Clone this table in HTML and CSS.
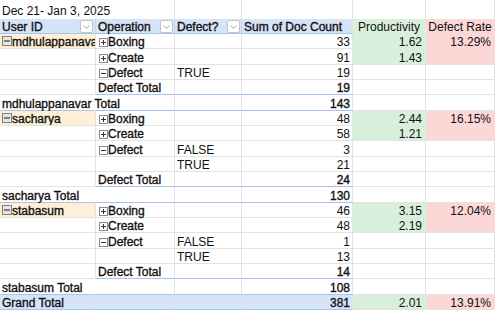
FILE: index.html
```html
<!DOCTYPE html>
<html>
<head>
<meta charset="utf-8">
<link rel="stylesheet" href="styles.css">
</head>
<body>
<div class="sheet">
  <div class="row title">
    <div class="cell ca spill">Dec 21- Jan 3, 2025</div>
    <div class="cell cb"></div><div class="cell cc"></div><div class="cell cd"></div><div class="cell ce"></div><div class="cell cf"></div>
  </div>
  <div class="row head">
    <div class="cell ca hd b">User ID<span class="dd"><svg width="7" height="4" viewBox="0 0 7 4"><path d="M0.5 0.5l3 3 3-3" fill="none" stroke="#a0a0a0"/></svg></span></div>
    <div class="cell cb hd b">Operation<span class="dd"><svg width="7" height="4" viewBox="0 0 7 4"><path d="M0.5 0.5l3 3 3-3" fill="none" stroke="#a0a0a0"/></svg></span></div>
    <div class="cell cc hd b">Defect?<span class="dd"><svg width="7" height="4" viewBox="0 0 7 4"><path d="M0.5 0.5l3 3 3-3" fill="none" stroke="#a0a0a0"/></svg></span></div>
    <div class="cell cd hd b">Sum of Doc Count</div>
    <div class="cell ce g gm ctr">Productivity</div>
    <div class="cell cf p pm ctr">Defect Rate</div>
  </div>

  <!-- mdhulappanavar -->
  <div class="row">
    <div class="cell ca user clip b"><svg class="tg" width="10" height="10" viewBox="0 0 10 10"><rect x="0.5" y="0.5" width="9" height="9" fill="#e6e6e6" stroke="#808080"/><path d="M2 5h6" stroke="#3c3c3c" stroke-width="1.2"/></svg>mdhulappanavar</div>
    <div class="cell cb b"><svg class="op" width="9" height="9" viewBox="0 0 9 9"><rect x="0.5" y="0.5" width="8" height="8" fill="#fff" stroke="#8a8a8a"/><path d="M2 4.5h5M4.5 2v5" stroke="#333"/></svg>Boxing</div>
    <div class="cell cc"></div>
    <div class="cell cd num">33</div>
    <div class="cell ce num g gm">1.62</div>
    <div class="cell cf num p pm">13.29%</div>
  </div>
  <div class="row">
    <div class="cell ca"></div>
    <div class="cell cb b"><svg class="op" width="9" height="9" viewBox="0 0 9 9"><rect x="0.5" y="0.5" width="8" height="8" fill="#fff" stroke="#8a8a8a"/><path d="M2 4.5h5M4.5 2v5" stroke="#333"/></svg>Create</div>
    <div class="cell cc"></div>
    <div class="cell cd num">91</div>
    <div class="cell ce num g">1.43</div>
    <div class="cell cf p"></div>
  </div>
  <div class="row">
    <div class="cell ca"></div>
    <div class="cell cb b"><svg class="op" width="9" height="9" viewBox="0 0 9 9"><rect x="0.5" y="0.5" width="8" height="8" fill="#fff" stroke="#8a8a8a"/><path d="M2 4.5h5" stroke="#333"/></svg>Defect</div>
    <div class="cell cc">TRUE</div>
    <div class="cell cd num">19</div>
    <div class="cell ce"></div><div class="cell cf"></div>
  </div>
  <div class="row">
    <div class="cell ca"></div>
    <div class="cell cb b bl">Defect Total</div>
    <div class="cell cc bl"></div>
    <div class="cell cd num b bl">19</div>
    <div class="cell ce"></div><div class="cell cf"></div>
  </div>
  <div class="row">
    <div class="cell ca spill b bl">mdhulappanavar Total</div>
    <div class="cell cb bl"></div>
    <div class="cell cc bl"></div>
    <div class="cell cd num b bl">143</div>
    <div class="cell ce"></div><div class="cell cf"></div>
  </div>

  <!-- sacharya -->
  <div class="row">
    <div class="cell ca user clip b"><svg class="tg" width="10" height="10" viewBox="0 0 10 10"><rect x="0.5" y="0.5" width="9" height="9" fill="#e6e6e6" stroke="#808080"/><path d="M2 5h6" stroke="#3c3c3c" stroke-width="1.2"/></svg>sacharya</div>
    <div class="cell cb b"><svg class="op" width="9" height="9" viewBox="0 0 9 9"><rect x="0.5" y="0.5" width="8" height="8" fill="#fff" stroke="#8a8a8a"/><path d="M2 4.5h5M4.5 2v5" stroke="#333"/></svg>Boxing</div>
    <div class="cell cc"></div>
    <div class="cell cd num">48</div>
    <div class="cell ce num g gm">2.44</div>
    <div class="cell cf num p pm">16.15%</div>
  </div>
  <div class="row">
    <div class="cell ca"></div>
    <div class="cell cb b"><svg class="op" width="9" height="9" viewBox="0 0 9 9"><rect x="0.5" y="0.5" width="8" height="8" fill="#fff" stroke="#8a8a8a"/><path d="M2 4.5h5M4.5 2v5" stroke="#333"/></svg>Create</div>
    <div class="cell cc"></div>
    <div class="cell cd num">58</div>
    <div class="cell ce num g">1.21</div>
    <div class="cell cf p"></div>
  </div>
  <div class="row">
    <div class="cell ca"></div>
    <div class="cell cb b"><svg class="op" width="9" height="9" viewBox="0 0 9 9"><rect x="0.5" y="0.5" width="8" height="8" fill="#fff" stroke="#8a8a8a"/><path d="M2 4.5h5" stroke="#333"/></svg>Defect</div>
    <div class="cell cc">FALSE</div>
    <div class="cell cd num">3</div>
    <div class="cell ce"></div><div class="cell cf"></div>
  </div>
  <div class="row">
    <div class="cell ca"></div>
    <div class="cell cb"></div>
    <div class="cell cc">TRUE</div>
    <div class="cell cd num">21</div>
    <div class="cell ce"></div><div class="cell cf"></div>
  </div>
  <div class="row">
    <div class="cell ca"></div>
    <div class="cell cb b bl">Defect Total</div>
    <div class="cell cc bl"></div>
    <div class="cell cd num b bl">24</div>
    <div class="cell ce"></div><div class="cell cf"></div>
  </div>
  <div class="row">
    <div class="cell ca spill b bl">sacharya Total</div>
    <div class="cell cb bl"></div>
    <div class="cell cc bl"></div>
    <div class="cell cd num b bl">130</div>
    <div class="cell ce"></div><div class="cell cf"></div>
  </div>

  <!-- stabasum -->
  <div class="row">
    <div class="cell ca user clip b"><svg class="tg" width="10" height="10" viewBox="0 0 10 10"><rect x="0.5" y="0.5" width="9" height="9" fill="#e6e6e6" stroke="#808080"/><path d="M2 5h6" stroke="#3c3c3c" stroke-width="1.2"/></svg>stabasum</div>
    <div class="cell cb b"><svg class="op" width="9" height="9" viewBox="0 0 9 9"><rect x="0.5" y="0.5" width="8" height="8" fill="#fff" stroke="#8a8a8a"/><path d="M2 4.5h5M4.5 2v5" stroke="#333"/></svg>Boxing</div>
    <div class="cell cc"></div>
    <div class="cell cd num">46</div>
    <div class="cell ce num g gm">3.15</div>
    <div class="cell cf num p pm">12.04%</div>
  </div>
  <div class="row">
    <div class="cell ca"></div>
    <div class="cell cb b"><svg class="op" width="9" height="9" viewBox="0 0 9 9"><rect x="0.5" y="0.5" width="8" height="8" fill="#fff" stroke="#8a8a8a"/><path d="M2 4.5h5M4.5 2v5" stroke="#333"/></svg>Create</div>
    <div class="cell cc"></div>
    <div class="cell cd num">48</div>
    <div class="cell ce num g">2.19</div>
    <div class="cell cf p"></div>
  </div>
  <div class="row">
    <div class="cell ca"></div>
    <div class="cell cb b"><svg class="op" width="9" height="9" viewBox="0 0 9 9"><rect x="0.5" y="0.5" width="8" height="8" fill="#fff" stroke="#8a8a8a"/><path d="M2 4.5h5" stroke="#333"/></svg>Defect</div>
    <div class="cell cc">FALSE</div>
    <div class="cell cd num">1</div>
    <div class="cell ce"></div><div class="cell cf"></div>
  </div>
  <div class="row">
    <div class="cell ca"></div>
    <div class="cell cb"></div>
    <div class="cell cc">TRUE</div>
    <div class="cell cd num">13</div>
    <div class="cell ce"></div><div class="cell cf"></div>
  </div>
  <div class="row">
    <div class="cell ca"></div>
    <div class="cell cb b bl">Defect Total</div>
    <div class="cell cc bl"></div>
    <div class="cell cd num b bl">14</div>
    <div class="cell ce"></div><div class="cell cf"></div>
  </div>
  <div class="row">
    <div class="cell ca spill b bl">stabasum Total</div>
    <div class="cell cb bl"></div>
    <div class="cell cc bl"></div>
    <div class="cell cd num b bl">108</div>
    <div class="cell ce"></div><div class="cell cf"></div>
  </div>

  <div class="row grand">
    <div class="cell ca gt b">Grand Total</div>
    <div class="cell cb gt"></div>
    <div class="cell cc gt"></div>
    <div class="cell cd gt gtd num b">381</div>
    <div class="cell ce num g">2.01</div>
    <div class="cell cf num p">13.91%</div>
  </div>
</div>
</body>
</html>
```

FILE: styles.css
```css
html, body {
  margin: 0;
  padding: 0;
  background: #fff;
}

body {
  width: 495px;
  height: 312px;
  overflow: hidden;
  font-family: "Liberation Sans", Arial, sans-serif;
  font-size: 12px;
  color: #111;
}

.sheet {
  display: flex;
  flex-direction: column;
}

.row {
  display: grid;
  grid-template-columns: 96px 79px 67px 111px 73px 69px;
  height: 15.333px;
}

.row.title {
  height: 19px;
}

.row.head {
  height: 15px;
}

.cell {
  box-sizing: border-box;
  min-width: 0;
  display: flex;
  align-items: flex-end;
  padding: 0 2px;
  line-height: 11px;
  white-space: nowrap;
  border-right: 1px solid #e2e3e3;
  border-bottom: 1px solid #e2e3e3;
}

.title .cell {
  border-bottom: none;
  padding-bottom: 2px;
}

.spill {
  overflow: visible;
  border-right-color: transparent;
}

.clip {
  overflow: hidden;
}

.b {
  -webkit-text-stroke: 0.35px currentColor;
}

.num {
  justify-content: flex-end;
}

.ce.num, .cf.num {
  padding-right: 3px;
}

.ctr {
  justify-content: center;
}

/* pivot header */
.hd {
  background: #d6e4f8;
  border-right-color: #c4d5ef;
  border-bottom-color: #a6c2ee;
  justify-content: space-between;
  padding-right: 1px;
}

.ca.hd {
  padding-right: 2px;
}

.cd.hd {
  border-right-color: #e2e3e3;
}

.dd {
  box-sizing: border-box;
  width: 13px;
  height: 13px;
  flex: none;
  border: 1px solid #c3c3c3;
  border-radius: 2px;
  background: #fff;
  display: flex;
  align-items: center;
  justify-content: center;
  -webkit-text-stroke: 0;
}

.dd svg {
  display: block;
  margin-top: 1px;
}

/* row labels */
.user {
  background: #fdf0d6;
}

.tg {
  flex: none;
  margin-bottom: 2px;
}

.op {
  flex: none;
  margin-left: 1px;
  margin-bottom: 1px;
}

/* blue pivot separators */
.bl {
  border-bottom-color: #a6c2ee;
}

.gt {
  background: #d6e4f8;
  border-right-color: #d6e4f8;
  border-bottom-color: #a6c2ee;
}

.gtd {
  border-right-color: #e2e3e3;
}

/* conditional colour blocks */
.g {
  background: #d8f0db;
  border-right-color: #d8f0db;
}

.gm {
  border-bottom-color: #d8f0db;
}

.p {
  background: #fbd8d6;
  border-right-color: #fbd8d6;
}

.pm {
  border-bottom-color: #fbd8d6;
}
```
